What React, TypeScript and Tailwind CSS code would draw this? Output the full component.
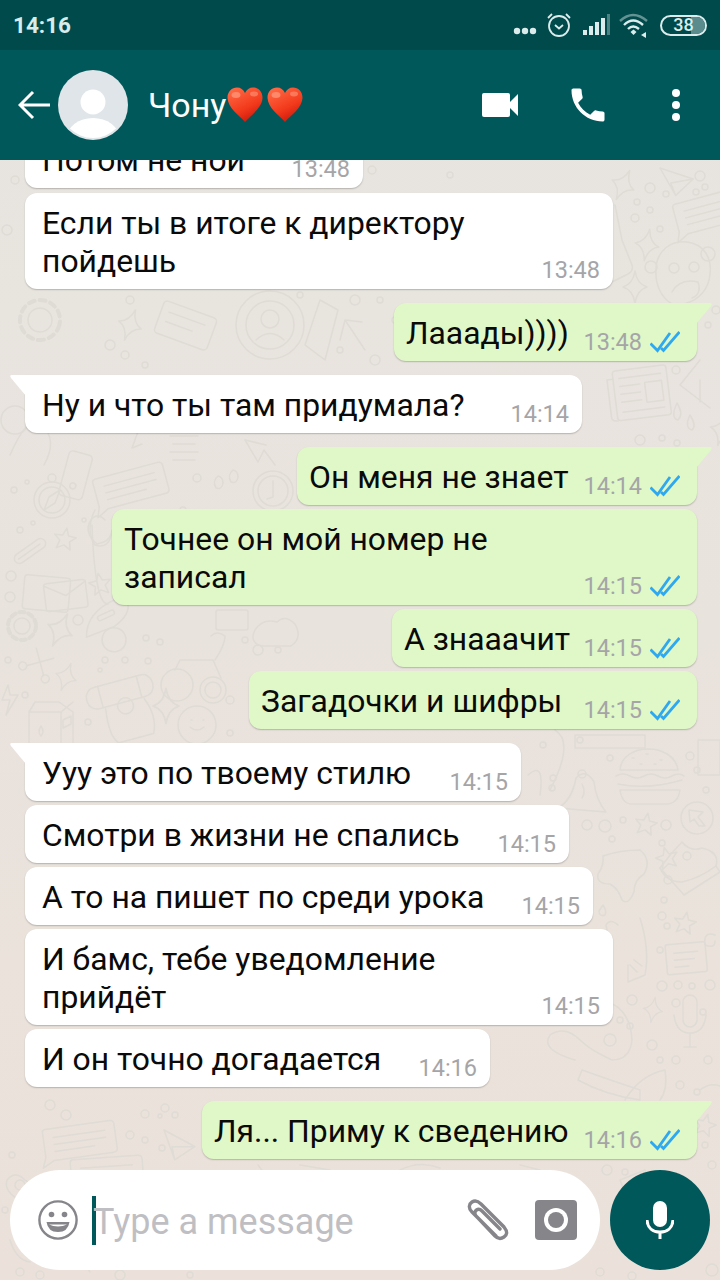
import React from "react";

const Time = ({ t }: { t: string }) => (
  <span className="text-[23.5px] leading-[24px] mb-[-2px] text-[#a5a5a8] whitespace-nowrap">{t}</span>
);

const Ticks = () => (
  <svg viewBox="0 0 30 22" className="w-[30px] h-[22px] ml-[8px] mb-[-1px] shrink-0" fill="none" stroke="#2fa8f0" strokeWidth="2.8">
    <path d="M0.5 12.5 L7.5 19.5 L20 2" />
    <path d="M11 17 L13.5 19.5 L29.5 1" />
  </svg>
);

const In = ({ w, tail, mt, time, children }: { w: string; tail?: boolean; mt: string; time: string; children: React.ReactNode }) => (
  <div className={`relative self-start ml-[25px] shrink-0 bg-white shadow-[0_1px_1.5px_rgba(0,0,0,0.22)] flex items-end justify-between pl-[17px] pr-[13px] pt-[11px] pb-[9px] ${tail ? "rounded-[12px] rounded-tl-none" : "rounded-[12px]"} ${w} ${mt}`}>
    {tail && (
      <svg viewBox="0 0 16 21" className="absolute left-[-15px] top-0 w-[16px] h-[21px]">
        <path d="M16 0 H2 Q-1 0 1 3 L16 21 Z" fill="#ffffff" />
      </svg>
    )}
    <div className="text-[31.85px] leading-[38px] text-[#0a0a0a] whitespace-nowrap">{children}</div>
    <Time t={time} />
  </div>
);

const Out = ({ w, tail, mt, time, children }: { w: string; tail?: boolean; mt: string; time: string; children: React.ReactNode }) => (
  <div className={`relative self-end mr-[23px] shrink-0 bg-[#e0f8c8] shadow-[0_1px_1.5px_rgba(0,0,0,0.22)] flex items-end justify-between pl-[12px] pr-[17px] pt-[11px] pb-[9px] ${tail ? "rounded-[12px] rounded-tr-none" : "rounded-[12px]"} ${w} ${mt}`}>
    {tail && (
      <svg viewBox="0 0 16 21" className="absolute right-[-15px] top-0 w-[16px] h-[21px]">
        <path d="M0 0 H14 Q17 0 15 3 L0 21 Z" fill="#e0f8c8" />
      </svg>
    )}
    <div className="text-[31.85px] leading-[38px] text-[#0a0a0a] whitespace-nowrap">{children}</div>
    <div className="flex items-end">
      <Time t={time} />
      <Ticks />
    </div>
  </div>
);

const Heart = () => (
  <svg viewBox="0 0 36 36" className="w-[36px] h-[36px] shrink-0">
    <defs>
      <linearGradient id="hg" x1="0.2" y1="0" x2="0.7" y2="1">
        <stop offset="0" stopColor="#ff6a45" />
        <stop offset="0.6" stopColor="#f23a1c" />
        <stop offset="1" stopColor="#c9160a" />
      </linearGradient>
    </defs>
    <path d="M18 35 C12 28 1 21 0.5 11 C0.3 4.5 5 0.5 10 0.5 C13.5 0.5 16.5 2.5 18 6 C19.5 2.5 22.5 0.5 26 0.5 C31 0.5 35.7 4.5 35.5 11 C35 21 24 28 18 35 Z" fill="url(#hg)" />
    <ellipse cx="9" cy="8" rx="4.5" ry="3" fill="#ff9c80" opacity="0.7" />
    <ellipse cx="27" cy="7" rx="4" ry="2.4" fill="#ff9c80" opacity="0.55" />
  </svg>
);

const Star4 = ({ x, y, r = 0, s = 1 }: { x: number; y: number; r?: number; s?: number }) => (
  <path transform={`translate(${x} ${y}) rotate(${r}) scale(${s})`} d="M0 -16 Q2 -3 12 0 Q2 3 0 16 Q-2 3 -12 0 Q-2 -3 0 -16 Z" />
);
const Star5 = ({ x, y, r = 0, s = 1 }: { x: number; y: number; r?: number; s?: number }) => (
  <path transform={`translate(${x} ${y}) rotate(${r}) scale(${s})`} d="M0 -11 L3 -3.5 L11 -3 L5 2 L7 10 L0 6 L-7 10 L-5 2 L-11 -3 L-3 -3.5 Z" />
);
const Speech = ({ x, y, r = 0, s = 1 }: { x: number; y: number; r?: number; s?: number }) => (
  <g transform={`translate(${x} ${y}) rotate(${r}) scale(${s})`}>
    <path d="M3 0 H68 Q72 0 72 4 V28 Q72 32 68 32 H8 L-4 38 L0 28 V3 Q0 0 3 0 Z" />
    <path d="M10 9 H62 M10 16 H62 M10 23 H50" />
  </g>
);
const News = ({ x, y, r = 0 }: { x: number; y: number; r?: number }) => (
  <g transform={`translate(${x} ${y}) rotate(${r})`}>
    <rect x="6" y="0" width="54" height="50" rx="3" />
    <path d="M6 8 H0 V46 Q0 50 6 50 M12 8 H54 M12 16 H32 M12 24 H32 M12 32 H32 M12 42 H54" />
    <rect x="37" y="15" width="17" height="20" />
  </g>
);
const Plane = ({ x, y, r = 0 }: { x: number; y: number; r?: number }) => (
  <g transform={`translate(${x} ${y}) rotate(${r})`}>
    <path d="M0 0 L34 8 L18 26 Z M34 8 L12 14 L18 26" />
  </g>
);

const dots: [number, number, number][] = [
  [650, 188, 5], [666, 194, 3], [637, 202, 3], [650, 210, 3], [635, 218, 4], [660, 229, 3], [696, 192, 3], [705, 187, 3], [700, 176, 5],
  [15, 180, 4], [7, 230, 5], [395, 320, 3], [372, 170, 4], [420, 280, 4], [450, 175, 3], [640, 440, 5], [662, 438, 3], [677, 443, 3],
  [716, 310, 4], [708, 325, 3], [676, 370, 4], [14, 490, 3], [27, 482, 2], [20, 530, 3], [33, 523, 2], [183, 510, 3], [197, 478, 4],
  [11, 576, 5], [10, 597, 5], [84, 520, 2], [78, 620, 5], [146, 638, 3], [160, 642, 3], [105, 660, 3], [125, 660, 3], [148, 661, 3],
  [8, 660, 3], [100, 670, 2], [25, 695, 3], [230, 700, 4], [245, 640, 3], [258, 650, 5], [278, 650, 3], [88, 722, 3], [230, 733, 3],
  [587, 825, 5], [605, 826, 6], [623, 820, 3], [612, 839, 3], [666, 825, 5], [662, 843, 3], [687, 856, 4], [668, 880, 4], [664, 900, 3], [662, 916, 4],
  [667, 926, 3], [660, 950, 3], [662, 986, 5], [678, 985, 4], [692, 986, 3], [710, 985, 5], [676, 1003, 4], [703, 1012, 3], [652, 1045, 5], [660, 1060, 3],
  [632, 1000, 5], [676, 1060, 4], [708, 1060, 4], [680, 1085, 4], [697, 1092, 3], [610, 1040, 6], [620, 1020, 3], [630, 1026, 3], [543, 745, 3], [580, 740, 3],
  [553, 778, 3], [552, 788, 3], [610, 758, 3], [690, 756, 4], [697, 770, 3], [706, 790, 3],
  [50, 1105, 5], [66, 1115, 5], [145, 1114, 4], [165, 1108, 4], [175, 1115, 3], [160, 1116, 2], [12, 1155, 3], [130, 1135, 4], [145, 1140, 3], [162, 1148, 3], [20, 1185, 5], [5, 1210, 3],
  [20, 1272, 4], [40, 1275, 4], [120, 1275, 5], [190, 1275, 3], [607, 1170, 5], [625, 1172, 3], [600, 1272, 4], [632, 1276, 4], [712, 1165, 4], [705, 1145, 3],
  [300, 295, 3], [130, 300, 4], [145, 365, 3], [110, 345, 5], [125, 355, 4], [340, 350, 3], [355, 300, 5], [375, 360, 5], [380, 300, 3],
];

const Doodles = () => (
  <svg viewBox="0 0 720 1280" className="absolute inset-0 w-[720px] h-[1280px]" fill="none" stroke="#dfdbd5" strokeWidth="1.5" strokeLinejoin="round" strokeLinecap="round">
    {dots.map(([x, y, r], i) => (
      <circle key={i} cx={x} cy={y} r={r} />
    ))}
    <Star4 x={623} y={185} r={25} />
    <Star4 x={647} y={245} r={10} />
    <Star4 x={635} y={287} r={0} />
    <Star4 x={722} y={430} r={15} />
    <Plane x={660} y={168} r={5} />
    <Speech x={672} y={205} r={-15} />
    <g transform="translate(682 270)">
      <path d="M-26 0 C-26 -20 -10 -30 5 -28 C22 -26 30 -12 28 4 C27 18 18 30 2 34 M-26 0 C-27 16 -20 28 -10 34" />
      <circle cx="-31" cy="-3" r="6" />
      <circle cx="26" cy="-16" r="7" />
      <circle cx="-8" cy="-2" r="5" />
      <circle cx="12" cy="-3" r="5" />
      <path d="M-10 22 Q-2 8 16 12 Q20 24 10 28" />
    </g>
    <path d="M615 205 L622 240 L632 265 Q634 272 626 275 L610 283" />
    <News x={606} y={372} r={-7} />
    <path d="M700 360 L680 385 L710 408 M700 402 L700 380" />
    <path d="M677 403 Q684 414 678 420 Q670 418 677 403 Z M690 415 Q697 426 692 430 Q684 428 690 415 Z" />
    <g transform="translate(52 500)">
      <circle r="18" />
      <circle r="13" />
      <path d="M-3 -3 L8 -10 L3 3 L-8 10 Z" />
      <circle cy="-22" r="4" />
    </g>
    <Speech x={92} y={480} r={-15} />
    <path d="M218 476 q-6 5 -2 12 q6 2 7 -5 q0 -6 -5 -7 Z M233 470 q-6 5 -2 12 q6 2 7 -5 q0 -6 -5 -7 Z" />
    <g transform="translate(273 491)">
      <circle r="20" />
      <circle r="15" />
      <path d="M0 -10 V6 L-6 8" />
    </g>
    <Star5 x={65} y={539} r={10} />
    <g transform="translate(30 551) rotate(-35)">
      <rect x="-18" y="-5" width="36" height="10" rx="5" />
      <path d="M-14 0 H12" />
    </g>
    <g transform="translate(30 575) rotate(5)">
      <rect x="-5" y="0" width="46" height="34" rx="3" />
      <g transform="translate(14 8) rotate(-12)">
        <rect width="42" height="28" rx="3" />
        <path d="M0 2 L21 14 L42 2" />
      </g>
    </g>
    <Star5 x={100} y={584} r={-10} />
    <path d="M95 510 Q85 530 95 545 Q110 550 112 530" />
    <g transform="translate(22 626)">
      <circle r="8" />
      <circle r="14" strokeDasharray="5 4" strokeWidth="4" />
    </g>
    <Star4 x={60} y={630} r={25} s={1.1} />
    <g transform="translate(83 630) rotate(-25)">
      <path d="M0 8 Q10 -14 40 -14 Q50 -14 52 -6 Q50 6 30 10 Z" />
      <rect x="18" y="-6" width="18" height="5" rx="2.5" />
      <circle cx="24" cy="22" r="12" />
    </g>
    <path d="M108 604 Q95 605 92 525" />
    <g transform="translate(40 662) rotate(30)">
      <path d="M-10 -10 L10 10 M10 -10 L-10 10" />
      <circle cx="-13" cy="12" r="4" />
      <circle cx="13" cy="12" r="4" />
    </g>
    <Star4 x={66} y={677} r={20} s={0.9} />
    <path d="M8 685 L2 700 L10 700 L6 715 L18 695 L10 695 Z" />
    <g transform="translate(25 700)">
      <path d="M4 12 L10 2 H34 L48 12 V45 H4 Z M4 12 H36 V45 M36 12 L48 2" />
      <path d="M16 26 Q20 32 16 36 Q12 32 16 26 Z M38 20 L46 16 V24 L38 28 Z" />
    </g>
    <g transform="translate(84 690) rotate(-15)">
      <rect width="68" height="22" rx="10" />
      <path d="M14 0 V22 M54 0 V22" />
      <circle cx="36" cy="26" r="8" />
      <path d="M16 24 Q12 52 20 60 H56 Q64 44 56 24" />
    </g>
    <Star4 x={166} y={706} r={0} s={1.1} />
    <g transform="translate(197 725)">
      <circle r="19" />
      <path d="M-7 2 Q0 8 7 2 M-6 -5 h1 M6 -5 h1" />
    </g>
    <g transform="translate(165 650)">
      <path d="M10 20 L15 10 H48 L56 28 M50 10 Q60 -5 60 -14 Q52 -20 46 -14" />
      <circle cx="12" cy="35" r="16" />
      <circle cx="48" cy="40" r="13" />
      <circle cx="48" cy="40" r="8" />
    </g>
    <path d="M255 630 q8 -12 22 -8 q8 -8 18 2 q8 14 -4 22 h-30 q-12 -4 -6 -16 Z" />
    <path d="M105 520 q-8 -8 -14 0 q-8 12 6 24 q12 -2 14 -10" />
    <g transform="translate(216 610)">
      <rect width="32" height="20" rx="2" />
    </g>

    {/* upper left gap */}
    <g transform="translate(270 325)">
      <circle r="34" />
      <circle r="24" />
      <circle cy="-6" r="9" />
      <path d="M-14 15 Q0 2 14 15" />
    </g>
    <g transform="translate(40 320) rotate(15)">
      <circle r="12" />
      <circle r="20" strokeDasharray="6 5" strokeWidth="4" />
    </g>
    <Star4 x={130} y={325} r={20} />
    <g transform="translate(165 300) rotate(20)">
      <rect width="56" height="34" rx="4" />
      <path d="M8 10 H46 M8 20 H36" />
    </g>
    <path d="M345 320 L365 350 M345 320 L340 340 M345 320 L362 322" />
    <path d="M305 345 L320 300 L338 310 L325 360 Z" />
    <path d="M10 455 Q30 410 42 425 Q58 440 44 465" />
    <circle cx="15" cy="420" r="14" />
    <g transform="translate(70 450) rotate(15)">
      <rect width="24" height="46" rx="4" />
      <circle cx="12" cy="34" r="3" />
    </g>
    <g transform="translate(170 436)">
      <path d="M0 0 H28 M3 8 H25 M0 16 H28 M3 24 H25" />
      <path d="M-30 -10 L-38 12 L-28 8" />
    </g>
    <path d="M245 440 L258 462 L264 450 L275 465 M245 440 L266 445" />

    {/* right side gap */}
    <g transform="translate(618 750)">
      <path d="M2 20 C4 -8 56 -8 60 20 Z" />
      <path d="M-2 26 Q5 22 12 26 T26 26 T40 26 T54 26 T66 26 M0 34 Q30 40 64 30 M2 40 H62 Q60 54 48 54 H14 Q4 54 2 40 Z" />
      <path d="M14 8 h2 M28 4 h2 M42 10 h2 M22 14 h2 M36 14 h2" />
    </g>
    <g transform="translate(580 790)">
      <path d="M-22 18 Q-8 10 -4 -12 Q6 -22 14 -8 Q16 10 26 22 Z" />
      <circle cx="2" cy="-16" r="4" />
      <path d="M2 -6 Q6 2 2 8" />
    </g>
    <g transform="translate(697 818)">
      <circle r="16" />
      <path d="M-8 -8 L6 -6 L1 -1 L8 8 L2 8 L-3 1 L-7 4 Z" />
    </g>
    <Star5 x={646} y={824} r={10} />
    <Star5 x={667} y={858} r={-15} />
    <Star5 x={685} y={923} r={10} />
    <g transform="translate(690 860)">
      <path d="M-8 -18 Q0 -8 12 -12 Q30 -8 26 6 Q10 18 -8 22 Q-24 22 -30 8 Q-20 -6 -8 -18 Z" />
      <path d="M-30 8 L-6 35 L30 12 L26 6" />
    </g>
    <path d="M603 856 Q620 850 640 850 Q652 860 644 874 Q634 880 634 892 Q628 906 622 900 Q618 888 610 884 Q596 884 598 874 Q604 866 603 856 Z" />
    <path d="M603 905 q4 6 2 10 q-6 2 -6 -4 Z" />
    <path d="M618 925 Q610 918 606 925 L610 945 M640 918 Q650 950 645 975 L628 982 L628 965" />
    <path d="M630 965 L637 972 M634 960 L642 966" />
    <g transform="translate(665 945) rotate(-5)">
      <rect width="40" height="30" rx="2" />
      <path d="M8 9 H32 M8 16 H28 M8 23 H22" />
    </g>
    <path d="M715 935 q-12 -4 -10 10 q10 4 10 -4" />
    <Star4 x={653} y={1010} r={10} s={0.8} />
    <g transform="translate(690 1005)">
      <rect x="-7" y="-10" width="14" height="32" rx="7" />
      <path d="M-16 10 Q-14 28 0 28 Q14 28 16 10 M0 28 V42 M-6 42 H6" />
    </g>
    <path d="M600 1000 Q630 1005 632 1040 Q630 1060 612 1060 Q590 1050 580 1040 Q565 1025 550 1035 Q540 1050 575 1060 M540 1020 Q545 1005 560 1000 L600 1000" />
    <path d="M582 1070 Q610 1080 640 1090 L640 1100 Q605 1095 578 1080 Z" />
    <path d="M625 1100 Q640 1075 665 1070 Q668 1090 660 1100" />
    <path d="M700 1090 q10 -8 20 -4" />
    <path d="M555 730 q20 12 -5 60" />
    <path d="M575 735 H645 V748 H575 Z" />
    <path d="M698 740 H720 V775 H698 Z" />
    <path d="M528 775 Q545 760 540 795" />

    {/* bottom left */}
    <Speech x={42} y={1130} r={-8} />
    <Plane x={164} y={1130} r={15} />
    <Speech x={70} y={1160} r={-4} />
    <path d="M25 1180 q-10 -10 -18 0 q-4 12 16 22 q14 -8 8 -18 Z" />
    <path d="M10 1240 Q16 1260 30 1262 M70 1268 L80 1260 L90 1272" />
    <path d="M620 1180 L645 1170 L655 1192 L630 1205 Z M630 1255 L650 1240 L670 1262 H640 Z" />
    <Star5 x={705} y={1125} r={15} />
    <circle cx="712" cy="1270" r="6" />
    <circle cx="700" cy="1110" r="4" />
    <path d="M258 1165 L268 1178 M300 1165 L330 1170 M400 1170 Q420 1160 440 1168 M520 1165 L540 1170" />
  </svg>
);

export default function App() {
  return (
    <div className="relative w-[720px] h-[1280px] overflow-hidden flex flex-col font-[Roboto,sans-serif] bg-linear-to-b from-[#e7e5e0] to-[#ebe1da]">
      <Doodles />
      <div className="relative h-[50px] shrink-0 bg-[#014a4c] flex items-center pl-[13px] pr-[13px]">
        <span className="text-[22.5px] font-bold mt-[2px] text-[#d9ecec]">14:16</span>
        <div className="ml-auto flex items-center">
          <svg viewBox="0 0 24 8" className="w-[24px] h-[8px] mt-[11px]" fill="#dcecec">
            <circle cx="4" cy="4" r="3.2" />
            <circle cx="12" cy="4" r="3.2" />
            <circle cx="20" cy="4" r="3.2" />
          </svg>
          <svg viewBox="0 0 26 26" className="w-[26px] h-[26px] ml-[9px]" fill="none" stroke="#dcecec" strokeWidth="1.8">
            <circle cx="13" cy="14" r="10" />
            <path d="M9 13 L13 16.5 L17 13 M2 6 L6 2 M24 6 L20 2" />
          </svg>
          <svg viewBox="0 0 28 22" className="w-[28px] h-[22px] ml-[10px]" fill="#dcecec">
            <rect x="1" y="16" width="4" height="5" />
            <rect x="7" y="12" width="4" height="9" />
            <rect x="13" y="8" width="4" height="13" />
            <rect x="19" y="4" width="4" height="17" />
            <rect x="25" y="0" width="3" height="21" opacity="0.35" />
          </svg>
          <svg viewBox="0 0 30 26" className="w-[30px] h-[26px] ml-[9px]" fill="none" stroke="#dcecec" strokeWidth="2.4">
            <path d="M1 9 Q14 -3 28 9" opacity="0.45" />
            <path d="M5 13 Q14 4 24 13" />
            <path d="M9 17 Q14 12 20 17" />
            <path d="M11.5 20 L14.5 17.5 L17.5 20 L14.5 23 Z" fill="#dcecec" stroke="none" />
            <path d="M27 20 L22 23 L27 26 Z" fill="#dcecec" stroke="none" />
          </svg>
          <div className="relative ml-[11px] w-[47px] h-[21px] rounded-[11px] border-2 border-[#dcecec] overflow-hidden flex items-center justify-center">
            <div className="absolute right-0 top-0 bottom-0 w-[14px] bg-[#5b8c8d]" />
            <span className="relative text-[18px] leading-[18px] font-medium text-[#dcecec]">38</span>
          </div>
        </div>
      </div>

      <div className="relative h-[110px] shrink-0 bg-[#00585a] flex items-center">
        <svg viewBox="0 0 32 30" className="w-[32px] h-[30px] ml-[18px] shrink-0" fill="none" stroke="#ffffff" strokeWidth="3">
          <path d="M32 15 H3 M15 2 L2 15 L15 28" />
        </svg>
        <svg viewBox="0 0 70 70" className="w-[70px] h-[70px] ml-[8px] shrink-0">
          <defs>
            <clipPath id="av">
              <circle cx="35" cy="35" r="33" />
            </clipPath>
          </defs>
          <circle cx="35" cy="35" r="35" fill="#dfe5e9" />
          <circle cx="35" cy="32" r="12.5" fill="#ffffff" />
          <ellipse cx="35" cy="68" rx="26" ry="20" fill="#ffffff" clipPath="url(#av)" />
        </svg>
        <span className="ml-[20px] text-[34px] text-white">Чону</span>
        <div className="flex gap-[4px] ml-[1px]">
          <Heart />
          <Heart />
        </div>
        <svg viewBox="0 0 36 24" className="absolute left-[482px] top-[43px] w-[36px] h-[24px]" fill="#ffffff">
          <rect x="0" y="0" width="28" height="24" rx="2" />
          <path d="M28 9 L36 1 V23 L28 15 Z" />
        </svg>
        <svg viewBox="0 0 24 24" className="absolute left-[566px] top-[33px] w-[44px] h-[44px]" fill="#ffffff">
          <path d="M6.62 10.79c1.44 2.83 3.76 5.14 6.59 6.59l2.2-2.2c.27-.27.67-.36 1.02-.24 1.12.37 2.33.57 3.57.57.55 0 1 .45 1 1V20c0 .55-.45 1-1 1C10.61 21 3 13.39 3 4c0-.55.45-1 1-1h3.5c.55 0 1 .45 1 1 0 1.25.2 2.45.57 3.57.11.35.03.74-.25 1.02l-2.2 2.2z" />
        </svg>
        <svg viewBox="0 0 8 32" className="absolute left-[672px] top-[39px] w-[8px] h-[32px]" fill="#ffffff">
          <circle cx="4" cy="4" r="4" />
          <circle cx="4" cy="16" r="4" />
          <circle cx="4" cy="28" r="4" />
        </svg>
      </div>

      <div className="relative flex-1 min-h-0 overflow-hidden flex flex-col justify-end pb-[11px]">
        <In w="w-[338px]" mt="mt-0" time="13:48">Потом не ной</In>
        <In w="w-[588px]" mt="mt-[5px]" time="13:48">Если ты в итоге к директору<br />пойдешь</In>
        <Out w="w-[303px]" mt="mt-[14px]" tail time="13:48">Лааады))))</Out>
        <In w="w-[557px]" mt="mt-[14px]" tail time="14:14">Ну и что ты там придумала?</In>
        <Out w="w-[400px]" mt="mt-[14px]" tail time="14:14">Он меня не знает</Out>
        <Out w="w-[585px]" mt="mt-[4px]" time="14:15">Точнее он мой номер не<br />записал</Out>
        <Out w="w-[305px]" mt="mt-[4px]" time="14:15">А знааачит</Out>
        <Out w="w-[448px]" mt="mt-[4px]" time="14:15">Загадочки и шифры</Out>
        <In w="w-[496px]" mt="mt-[14px]" tail time="14:15">Ууу это по твоему стилю</In>
        <In w="w-[544px]" mt="mt-[4px]" time="14:15">Смотри в жизни не спались</In>
        <In w="w-[568px]" mt="mt-[4px]" time="14:15">А то на пишет по среди урока</In>
        <In w="w-[588px]" mt="mt-[4px]" time="14:15">И бамс, тебе уведомление<br />прийдёт</In>
        <In w="w-[465px]" mt="mt-[4px]" time="14:16">И он точно догадается</In>
        <Out w="w-[495px]" mt="mt-[14px]" tail time="14:16">Ля... Приму к сведению</Out>
      </div>

      <div className="relative shrink-0 flex gap-[10px] pl-[10px] pr-[10px] pb-[10px]">
        <div className="flex-1 h-[100px] rounded-[50px] bg-white flex items-center">
          <svg viewBox="0 0 40 40" className="w-[40px] h-[40px] ml-[28px] shrink-0" fill="none" stroke="#85858a" strokeWidth="2.4">
            <circle cx="20" cy="20" r="18.6" />
            <circle cx="13.5" cy="14.5" r="2.8" fill="#85858a" stroke="none" />
            <circle cx="26.5" cy="14.5" r="2.8" fill="#85858a" stroke="none" />
            <path d="M8.5 22 H31.5 Q30 32 20 32 Q10 32 8.5 22 Z" fill="#85858a" stroke="none" />
            <path d="M11 24.5 H29 Q25 26.5 20 26.5 Q15 26.5 11 24.5 Z" fill="#ffffff" stroke="none" />
          </svg>
          <div className="w-[4px] h-[49px] bg-[#00585a] ml-[14px] shrink-0" />
          <span className="ml-[-3px] text-[36px] leading-[40px] mt-[4px] text-[#bfbfc3]">Type a message</span>
          <svg viewBox="0 0 44 42" className="w-[44px] h-[42px] ml-auto shrink-0" fill="none" stroke="#85858a" strokeWidth="3.4" strokeLinecap="round">
            <path d="M30 37 L6 13 C2 9 3 5 6 3 C9 1 12 2 15 5 L38 28 C42 33 41 36 38 38 C35 40 32 40 29 37 L10 17 C8 14 9 12 10.5 11 C12 10 14 10 16 12 L34 30" />
          </svg>
          <svg viewBox="0 0 42 40" className="w-[42px] h-[40px] ml-[25px] mr-[23px] shrink-0">
            <rect width="42" height="40" rx="4" fill="#85858a" />
            <circle cx="21" cy="20" r="12" fill="#ffffff" />
            <circle cx="21" cy="20" r="8" fill="#85858a" />
          </svg>
        </div>
        <div className="w-[100px] h-[100px] rounded-full bg-[#00585a] flex items-center justify-center shrink-0">
          <svg viewBox="0 0 28 38" className="w-[28px] h-[38px]" fill="none" stroke="#ffffff" strokeWidth="3">
            <rect x="7" y="0" width="14" height="26" rx="7" fill="#ffffff" stroke="none" />
            <path d="M1 19 C1.5 27 7 31 14 31 C21 31 26.5 27 27 19 M14 30 V38" />
          </svg>
        </div>
      </div>
    </div>
  );
}
